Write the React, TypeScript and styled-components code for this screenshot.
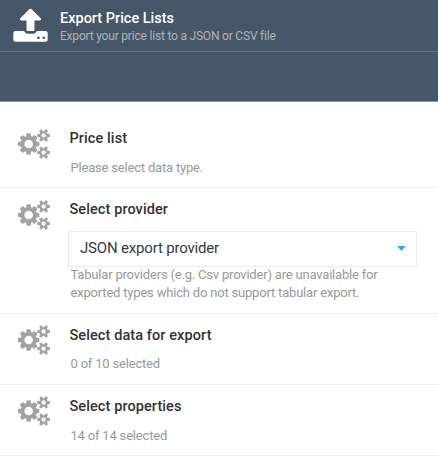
import React from "react";
import styled, { createGlobalStyle } from "styled-components";

const GlobalStyle = createGlobalStyle`
  * { box-sizing: border-box; }
  body { margin: 0; background: #fff; font-family: Roboto, "Liberation Sans", sans-serif; overflow: hidden; }
`;

const Blade = styled.main`
  width: 438px;
  height: 457px;
  display: flex;
  flex-direction: column;
  background: #fff;
  overflow: hidden;
`;

const Header = styled.header`
  flex: none;
  height: 52px;
  display: flex;
  padding: 8px 0 0 12px;
  background: #465769;
  border-bottom: 1px solid #65788a;
`;

const HeaderText = styled.div`
  padding-left: 11px;
`;

const Title = styled.h1`
  margin: 0;
  font-size: 14.5px;
  font-weight: 500;
  line-height: 22px;
  color: #fff;
  white-space: nowrap;
`;

const Subtitle = styled.p`
  margin: -2px 0 0;
  font-size: 12px;
  letter-spacing: -0.2px;
  line-height: 16px;
  color: #b0b3b7;
  white-space: nowrap;
`;

const Toolbar = styled.div`
  flex: none;
  height: 50px;
  background: #465769;
  border-bottom: 1px solid #8490a0;
`;

const StepList = styled.div`
  flex: none;
  padding-top: 15px;
`;

const Step = styled.section<{ $height: number }>`
  height: ${({ $height }) => $height}px;
  display: flex;
  padding: 11px 21px 0 18px;
  border-bottom: 1px solid #eef0f4;
`;

const StepBody = styled.div`
  flex: 1;
  padding-left: 18px;
`;

const StepTitle = styled.h2`
  margin: 0 0 0 1.5px;
  font-size: 14.5px;
  font-weight: 500;
  letter-spacing: 0.09px;
  line-height: 22px;
  color: #333;
  white-space: nowrap;
`;

const Description = styled.p<{ $gap: number }>`
  margin: ${({ $gap }) => $gap}px 0 0 2.5px;
  font-size: 13px;
  letter-spacing: -0.19px;
  line-height: 18px;
  color: #999;
  white-space: nowrap;
`;

const Select = styled.div`
  height: 36px;
  margin-top: 10px;
  padding: 0 10px 2px 11px;
  display: flex;
  align-items: center;
  justify-content: space-between;
  border: 1px solid #eaecf2;
  font-size: 15px;
  letter-spacing: -0.18px;
  color: #333b45;
`;

const UploadIcon = styled.svg`
  flex: none;
  display: block;
  width: 37px;
  height: 36px;
`;

const GearsIcon = styled.svg<{ $offset: number }>`
  flex: none;
  display: block;
  width: 32px;
  height: 30px;
  margin-top: ${({ $offset }) => $offset}px;
`;

const Caret = styled.svg`
  display: block;
  width: 9px;
  height: 5px;
`;

const UPLOAD = "M1344 1472q0-26-19-45t-45-19-45 19-19 45 19 45 45 19 45-19 19-45zm256 0q0-26-19-45t-45-19-45 19-19 45 19 45 45 19 45-19 19-45zm128-224v320q0 40-28 68t-68 28h-1472q-40 0-68-28t-28-68v-320q0-40 28-68t68-28h427q21 56 70.5 92t110.5 36h256q61 0 110.5-36t70.5-92h427q40 0 68 28t28 68zm-325-648q-17 40-59 40h-256v448q0 26-19 45t-45 19h-256q-26 0-45-19t-19-45v-448h-256q-42 0-59-40-17-39 14-69l448-448q18-19 45-19t45 19l448 448q31 30 14 69z";

const SMALL_GEAR = "v140q0 16-149 31-12 27-30 52 51 113 51 138 0 4-4 7-122 71-124 71-8 0-46-47t-52-68q-20 2-30 2t-30-2q-14 21-52 68t-46 47q-2 0-124-71-4-3-4-7 0-25 51-138-18-25-30-52-149-15-149-31v-140q0-16 149-31 13-29 30-52-51-113-51-138 0-4 4-7 4-2 35-20t59-34 30-16q8 0 46 46.5t52 67.5q20-2 30-2t30 2q51-71 92-112l6-2q4 0 124 70 4 3 4 7 0 25-51 138 17 23 30 52 149 15 149 31z";

const GEARS = "M896 896q0-106-75-181t-181-75-181 75-75 181 75 181 181 75 181-75 75-181zm768 512q0-52-38-90t-90-38-90 38-38 90q0 53 37.5 90.5t90.5 37.5 90.5-37.5 37.5-90.5zm0-1024q0-52-38-90t-90-38-90 38-38 90q0 53 37.5 90.5t90.5 37.5 90.5-37.5 37.5-90.5zm-384 421v185q0 10-7 19.5t-16 10.5l-155 24q-11 35-32 76 34 48 90 115 7 11 7 20 0 12-7 19-23 30-82.5 89.5t-78.5 59.5q-11 0-21-7l-115-90q-37 19-77 31-11 108-23 155-7 24-30 24h-186q-11 0-20-7.5t-10-17.5l-23-153q-34-10-75-31l-118 89q-7 7-20 7-11 0-21-8-144-133-144-160 0-9 7-19 10-14 41-53t47-61q-23-44-35-82l-152-24q-10-1-17-9.5t-7-19.5v-185q0-10 7-19.5t16-10.5l155-24q11-35 32-76-34-48-90-115-7-11-7-20 0-12 7-20 22-30 82-89t79-59q11 0 21 7l115 90q34-18 77-32 11-108 23-154 7-24 30-24h186q11 0 20 7.5t10 17.5l23 153q34 10 75 31l118-89q8-7 20-7 11 0 21 8 144 133 144 160 0 8-7 19-12 16-42 54t-45 60q23 48 34 82l152 23q10 2 17 10.5t7 19.5zM1920 1338" + SMALL_GEAR + "M1920 314" + SMALL_GEAR;

const Gears = ({ offset = 0 }: { offset?: number }) => (
  <GearsIcon $offset={offset} viewBox="0 0 1920 1792" aria-hidden="true">
    <path d={GEARS} fill="#a3a3a3" fillRule="evenodd" />
  </GearsIcon>
);

export default function App() {
  return (
    <>
      <GlobalStyle />
      <Blade>
        <Header>
          <UploadIcon viewBox="0 32 1792 1744" aria-hidden="true">
            <path d={UPLOAD} fill="#fff" fillRule="evenodd" />
          </UploadIcon>
          <HeaderText>
            <Title>Export Price Lists</Title>
            <Subtitle>Export your price list to a JSON or CSV file</Subtitle>
          </HeaderText>
        </Header>
        <Toolbar />
        <StepList>
          <Step $height={71}>
            <Gears offset={1} />
            <StepBody>
              <StepTitle>Price list</StepTitle>
              <Description $gap={9}>Please select data type.</Description>
            </StepBody>
          </Step>
          <Step $height={126}>
            <Gears offset={1} />
            <StepBody>
              <StepTitle>Select provider</StepTitle>
              <Select role="combobox" aria-expanded="false">
                JSON export provider
                <Caret viewBox="0 0 9 5" aria-hidden="true">
                  <path d="M0 0H9L4.5 5Z" fill="#34a9e8" />
                </Caret>
              </Select>
              <Description $gap={-1}>
                Tabular providers (e.g. Csv provider) are unavailable for
                <br />
                exported types which do not support tabular export.
              </Description>
            </StepBody>
          </Step>
          <Step $height={71}>
            <Gears />
            <StepBody>
              <StepTitle>Select data for export</StepTitle>
              <Description $gap={8}>0 of 10 selected</Description>
            </StepBody>
          </Step>
          <Step $height={71}>
            <Gears />
            <StepBody>
              <StepTitle>Select properties</StepTitle>
              <Description $gap={9}>14 of 14 selected</Description>
            </StepBody>
          </Step>
        </StepList>
      </Blade>
    </>
  );
}
